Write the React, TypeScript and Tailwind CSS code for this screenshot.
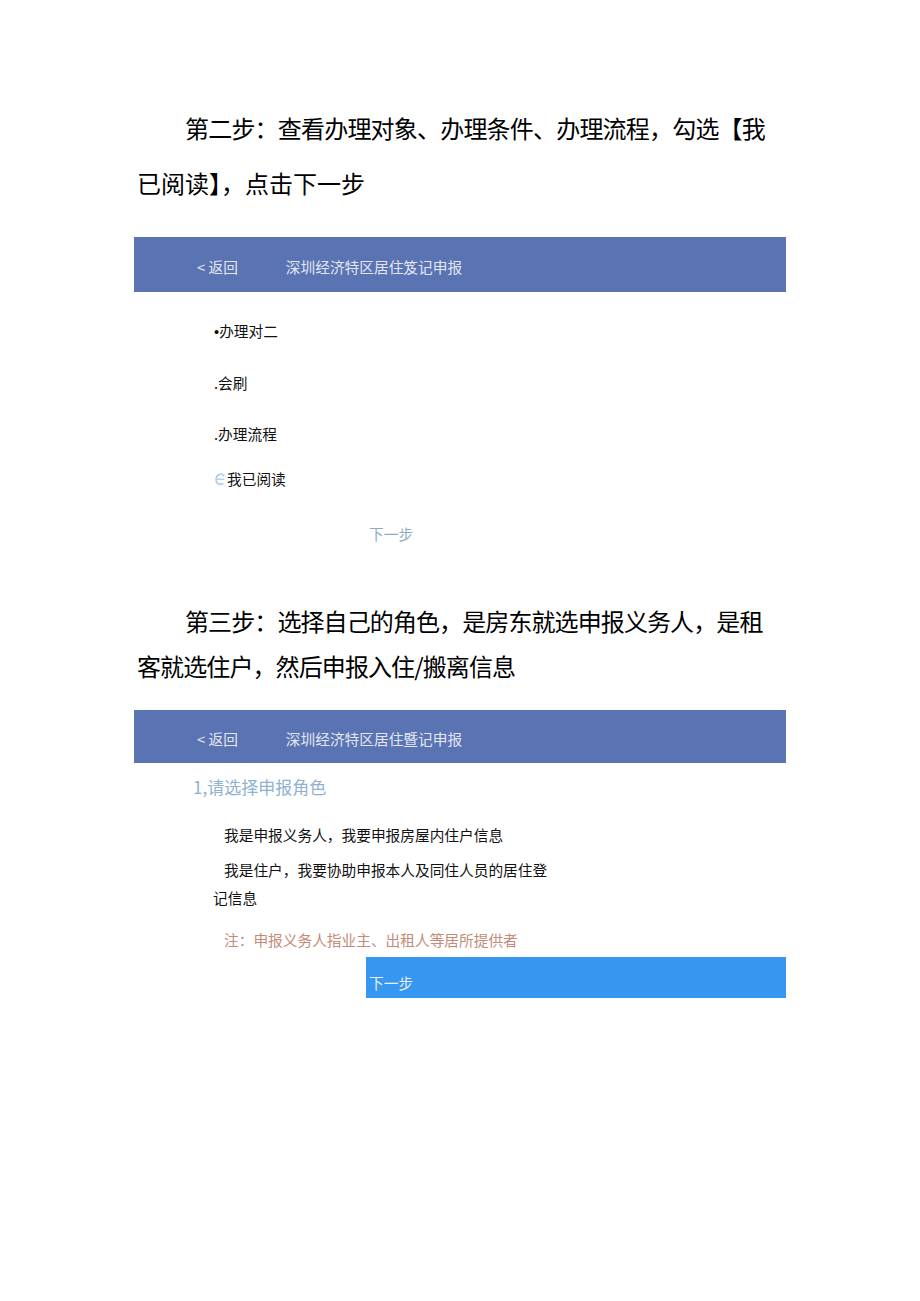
import React from "react";

const CheckCircle: React.FC = () => (
  <svg width="12" height="14" viewBox="0 0 12 14" className="mr-[1px]">
    {/* open radio circle, drawn the way the screenshot shows it */}
    <path
      d="M10.2 4.4 C9.2 2.2 6.8 1.5 4.8 2.6 C2.2 4 1.4 7.8 2.7 10.2 C4 12.6 7.2 12.8 9.4 11.2"
      fill="none"
      stroke="#b6d0ea"
      strokeWidth="1.8"
    />
    <path d="M2.2 7.3 H10.4" stroke="#b6d0ea" strokeWidth="1.5" />
  </svg>
);

const Banner: React.FC<{ title: string; className?: string }> = ({
  title,
  className,
}) => (
  <div
    className={
      "flex items-center pt-[5px] bg-[#5a73b2] text-[14.7px] text-[#e2e7f2] " +
      (className ?? "")
    }
  >
    <span className="ml-[63px]">&lt; 返回</span>
    <span className="ml-[48px]">{title}</span>
  </div>
);

export default function App() {
  return (
    <div className="min-h-[1301px] bg-white font-['Noto_Sans_CJK_SC','Noto_Sans',sans-serif] text-black">
      <div className="ml-[134px] w-[652px] pt-[100px]">
        {/* step two */}
        <p className="pl-[3px] text-[24px] leading-[55px] whitespace-nowrap">
          <span className="block pl-[48px] tracking-[-0.8px]">
            第二步：查看办理对象、办理条件、办理流程，勾选【我
          </span>
          <span className="block">已阅读】，点击下一步</span>
        </p>

        <Banner title="深圳经济特区居住笈记申报" className="mt-[27px] h-[55px]" />

        <div className="text-[14.7px] text-[#111]">
          <div className="mt-[28px] h-[22px] leading-[22px] pl-[80px]">
            <span className="font-['Liberation_Sans',sans-serif]">•</span>办理对二
          </div>
          <div className="mt-[30px] h-[22px] leading-[22px] pl-[80px]">.会刷</div>
          <div className="mt-[29px] h-[22px] leading-[22px] pl-[80px]">.办理流程</div>
          <div className="mt-[23px] h-[22px] flex items-center pl-[80px]">
            <CheckCircle />
            <span>我已阅读</span>
          </div>
          <div className="mt-[33px] h-[22px] leading-[22px] pl-[235px] text-[#8eaac6]">
            下一步
          </div>
        </div>

        {/* step three */}
        <p className="mt-[53px] pl-[3px] text-[24px] leading-[45px] whitespace-nowrap tracking-[-0.9px]">
          <span className="block pl-[48px]">
            第三步：选择自己的角色，是房东就选申报义务人，是租
          </span>
          <span className="block">客就选住户，然后申报入住/搬离信息</span>
        </p>

        <Banner title="深圳经济特区居住暨记申报" className="mt-[22px] h-[53px]" />

        <div className="mt-[12px] h-[24px] leading-[24px] pl-[59px] text-[17px] text-[#8fb2d2]">
          1,请选择申报角色
        </div>
        <div className="text-[14.7px] text-[#111]">
          <div className="mt-[25px] h-[22px] leading-[22px] pl-[90px]">
            我是申报义务人，我要申报房屋内住户信息
          </div>
          <div className="mt-[13px] h-[22px] leading-[22px] pl-[90px]">
            我是住户，我要协助申报本人及同住人员的居住登
          </div>
          <div className="mt-[6px] h-[22px] leading-[22px] pl-[79px]">记信息</div>
          <div className="mt-[20px] h-[22px] leading-[22px] pl-[90px] text-[#c48b79]">
            注：申报义务人指业主、出租人等居所提供者
          </div>
        </div>
        <div className="mt-[6px] ml-[232px] h-[41px] bg-[#3796f0] pl-[3px] pt-[15px] text-[14.7px] leading-[22px] text-[#e6f0fc]">
          下一步
        </div>
      </div>
    </div>
  );
}
